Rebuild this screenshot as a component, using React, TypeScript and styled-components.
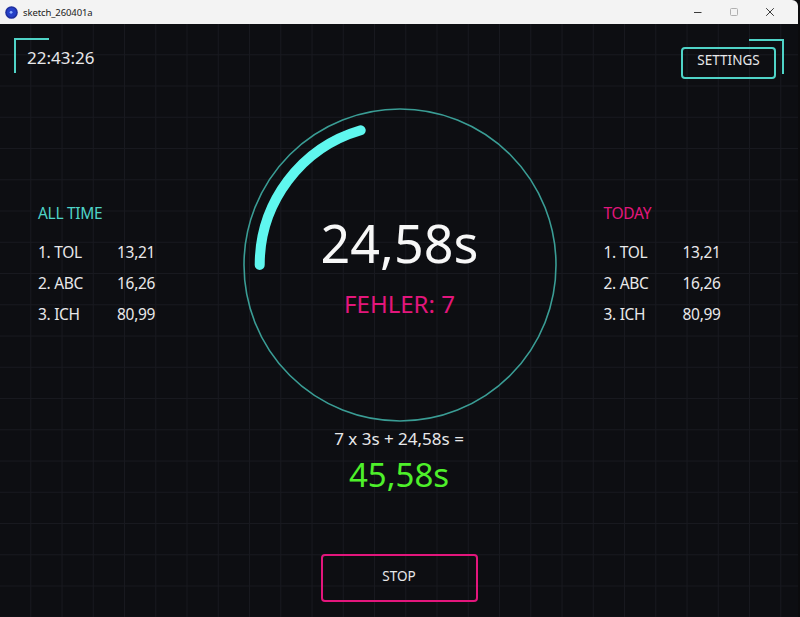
import React from 'react';
import styled, { createGlobalStyle } from 'styled-components';

const TEAL = '#4fd3c7';
const MAGENTA = '#e3167c';
const TEXT = '#e8e8ea';

interface Score {
  name: string;
  time: string;
}

const allTime: Score[] = [
  { name: '1. TOL', time: '13,21' },
  { name: '2. ABC', time: '16,26' },
  { name: '3. ICH', time: '80,99' },
];

const today: Score[] = [
  { name: '1. TOL', time: '13,21' },
  { name: '2. ABC', time: '16,26' },
  { name: '3. ICH', time: '80,99' },
];

const GlobalStyle = createGlobalStyle`
  * { box-sizing: border-box; }
  html, body {
    margin: 0;
    background: #0b0b0d;
    font-family: "Noto Sans", "Open Sans", sans-serif;
  }
`;

// arc point on the dial, angle in degrees (screen coords, clockwise)
const polar = (cx: number, cy: number, r: number, deg: number) => {
  const a = (deg * Math.PI) / 180;
  return { x: cx + r * Math.cos(a), y: cy + r * Math.sin(a) };
};

const Dial = ({ seconds, limit }: { seconds: number; limit: number }) => {
  const size = 314;
  const c = size / 2;
  const r = 140.3;
  const sweep = (seconds / limit) * 360;
  const start = polar(c, c, r, 180);
  const end = polar(c, c, r, 180 + sweep);
  const large = sweep > 180 ? 1 : 0;
  return (
    <DialSvg width={size} height={size} viewBox={`0 0 ${size} ${size}`}>
      <circle cx={c} cy={c} r={156} fill="none" stroke="#3a9d95" strokeWidth={1.6} />
      <path
        d={`M ${start.x} ${start.y} A ${r} ${r} 0 ${large} 1 ${end.x} ${end.y}`}
        fill="none"
        stroke="#5ff7ef"
        strokeWidth={10}
        strokeLinecap="round"
      />
    </DialSvg>
  );
};

const ScoreBoard = ({ title, color, inset, scores }: { title: string; color: string; inset: number; scores: Score[] }) => (
  <Board $inset={inset}>
    <BoardTitle $color={color}>{title}</BoardTitle>
    <ScoreGrid>
      {scores.map((s) => (
        <React.Fragment key={s.name}>
          <ScoreCell>{s.name}</ScoreCell>
          <ScoreCell>{s.time}</ScoreCell>
        </React.Fragment>
      ))}
    </ScoreGrid>
  </Board>
);

const App = () => {
  return (
    <>
      <GlobalStyle />
      <Window>
        <TitleBar>
          <AppIcon width="13" height="13" viewBox="0 0 12 12">
            <circle cx="6" cy="6" r="5.8" fill="#1f2f9e" />
            <circle cx="6" cy="6" r="4.4" fill="#2540c8" />
            <circle cx="5.6" cy="5.8" r="1.3" fill="#8fb0ff" />
          </AppIcon>
          <TitleText>sketch_260401a</TitleText>
          <Controls>
            <ControlButton>
              <svg width="10" height="10" viewBox="0 0 10 10">
                <path d="M1 5.5h7.5" stroke="#3a3a3a" strokeWidth="1" />
              </svg>
            </ControlButton>
            <ControlButton>
              <svg width="10" height="10" viewBox="0 0 10 10">
                <rect x="1.5" y="1.5" width="7" height="7" rx="1" fill="none" stroke="#b0b0b0" strokeWidth="1" />
              </svg>
            </ControlButton>
            <ControlButton>
              <svg width="10" height="10" viewBox="0 0 10 10">
                <path d="M1.2 1.2l7.6 7.6M8.8 1.2L1.2 8.8" stroke="#3a3a3a" strokeWidth="1" />
              </svg>
            </ControlButton>
          </Controls>
        </TitleBar>

        <Canvas>
          <TopBar>
            <ClockBox>
              <Clock>22:43:26</Clock>
            </ClockBox>
            <SettingsBox>
              <OutlineButton $color={TEAL} $w={95} $h={32}>
                SETTINGS
              </OutlineButton>
            </SettingsBox>
          </TopBar>

          <Middle>
            <ScoreBoard title="ALL TIME" color={TEAL} inset={38} scores={allTime} />
            <DialWrap>
              <Dial seconds={24.58} limit={120} />
              <DialText>
                <Elapsed>24,58s</Elapsed>
                <Faults>FEHLER: 7</Faults>
              </DialText>
            </DialWrap>
            <ScoreBoard title="TODAY" color={MAGENTA} inset={47} scores={today} />
          </Middle>

          <Footer>
            <Formula>7 x 3s + 24,58s =</Formula>
            <Total>45,58s</Total>
            <OutlineButton $color={MAGENTA} $w={157} $h={48}>
              STOP
            </OutlineButton>
          </Footer>
        </Canvas>
      </Window>
    </>
  );
};

const Window = styled.div`
  width: 798px;
  height: 617px;
  display: flex;
  flex-direction: column;
  overflow: hidden;
`;

const TitleBar = styled.header`
  height: 24px;
  flex: none;
  display: flex;
  align-items: center;
  background: #f3f3f3;
  border-top-right-radius: 6px;
  padding-left: 5px;
`;

const AppIcon = styled.svg`
  flex: none;
`;

const TitleText = styled.span`
  margin-left: 5px;
  font-family: "Noto Sans", sans-serif;
  font-size: 9.5px;
  color: #1a1a1a;
  letter-spacing: -0.1px;
`;

const Controls = styled.div`
  margin-left: auto;
  display: flex;
  height: 100%;
  padding-right: 10px;
`;

const ControlButton = styled.span`
  width: 36px;
  height: 100%;
  display: flex;
  align-items: center;
  justify-content: center;
`;

const Canvas = styled.main`
  flex: 1;
  display: flex;
  flex-direction: column;
  background-color: #0d0e12;
  background-image: linear-gradient(to right, transparent 30px, #18191f 30px, #18191f 31.25px),
    linear-gradient(to bottom, transparent 30px, #18191f 30px, #18191f 31.25px);
  background-size: 31.25px 31.25px;
  color: ${TEXT};
`;

const TopBar = styled.div`
  height: 84px;
  display: flex;
  justify-content: space-between;
  align-items: flex-start;
  padding: 14px 14px 0 14px;
`;

const ClockBox = styled.div`
  position: relative;
  padding: 11px 0 0 13px;

  &::before {
    content: '';
    position: absolute;
    top: 0;
    left: 0;
    width: 33px;
    height: 33px;
    border-top: 2px solid ${TEAL};
    border-left: 2px solid ${TEAL};
  }
`;

const Clock = styled.div`
  font-size: 17px;
  line-height: 17px;
  color: ${TEXT};
`;

const SettingsBox = styled.div`
  position: relative;
  margin-top: 1px;
  padding: 8px 8px 0 0;

  &::before {
    content: '';
    position: absolute;
    top: 0;
    right: 0;
    width: 33px;
    height: 33px;
    border-top: 2px solid ${TEAL};
    border-right: 2px solid ${TEAL};
  }
`;

const OutlineButton = styled.button<{ $color: string; $w: number; $h: number }>`
  width: ${(p) => p.$w}px;
  height: ${(p) => p.$h}px;
  display: flex;
  align-items: center;
  justify-content: center;
  padding: 0 0 4px;
  background: transparent;
  border: 2px solid ${(p) => p.$color};
  border-radius: 4px;
  font-family: "Noto Sans", sans-serif;
  font-size: 13.5px;
  line-height: 1;
  color: ${TEXT};
`;

const Middle = styled.div`
  display: grid;
  grid-template-columns: 242.5px 314px 1fr;
  align-items: start;
`;

const Board = styled.section<{ $inset: number }>`
  padding-left: ${(p) => p.$inset}px;
  padding-top: 89.5px;
`;

const BoardTitle = styled.div<{ $color: string }>`
  font-size: 15.5px;
  line-height: 31px;
  color: ${(p) => p.$color};
  margin-bottom: 8px;
  letter-spacing: -0.3px;
`;

const ScoreGrid = styled.div`
  display: grid;
  grid-template-columns: 79px auto;
  grid-auto-rows: 31px;
`;

const ScoreCell = styled.div`
  font-size: 15.5px;
  line-height: 31px;
  color: ${TEXT};
  white-space: nowrap;
  letter-spacing: -0.3px;
`;

const DialWrap = styled.div`
  display: grid;
  width: 314px;
  height: 314px;
`;

const DialSvg = styled.svg`
  grid-area: 1 / 1;
`;

const DialText = styled.div`
  grid-area: 1 / 1;
  display: flex;
  flex-direction: column;
  align-items: center;
  gap: 22.5px;
  padding-top: 109px;
`;

const Elapsed = styled.div`
  font-size: 52px;
  line-height: 52px;
  color: #f7f7f7;
`;

const Faults = styled.div`
  font-size: 24px;
  line-height: 24px;
  color: ${MAGENTA};
`;

const Footer = styled.div`
  display: flex;
  flex-direction: column;
  align-items: center;
  padding-top: 8px;

  & > button {
    margin-top: 63.5px;
    padding-bottom: 3px;
  }
`;

const Formula = styled.div`
  font-size: 17px;
  line-height: 17px;
  color: ${TEXT};
`;

const Total = styled.div`
  margin-top: 10.5px;
  font-size: 33px;
  line-height: 33px;
  color: #4ef02a;
`;

export default App;
